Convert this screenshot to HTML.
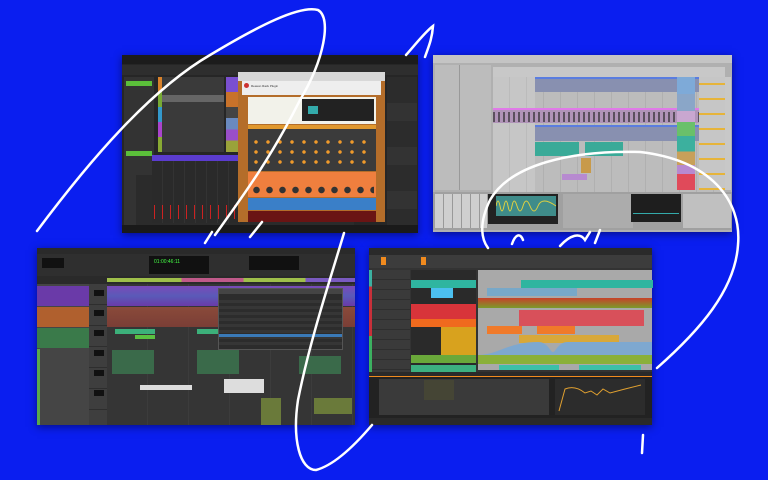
<!DOCTYPE html>
<html><head><meta charset="utf-8"><style>
*{margin:0;padding:0;box-sizing:border-box}
body{width:768px;height:480px;background:#0a1ef0;overflow:hidden;position:relative;font-family:"Liberation Sans",sans-serif}
.a{position:absolute}
.win{position:absolute;box-shadow:0 2px 8px rgba(0,0,30,.5)}
</style></head><body>

<!-- Window 1 (Reason) -->
<div class="win" style="left:122px;top:55px;width:296px;height:178px;background:#262626">
 <div class="a" style="left:0;top:0;width:296px;height:9px;background:#1c1c1c"></div>
 <div class="a" style="left:0;top:10px;width:296px;height:10px;background:#2e2e2e"></div>
 <div class="a" style="left:2px;top:22px;width:30px;height:150px;background:#333"></div>
 <div class="a" style="left:4px;top:26px;width:26px;height:5px;background:#5bbf3a"></div>
 <div class="a" style="left:4px;top:96px;width:26px;height:5px;background:#5bbf3a"></div>
 <div class="a" style="left:36px;top:22px;width:66px;height:75px;background:#3a3a3a"></div>
 <div class="a" style="left:36px;top:22px;width:4px;height:75px;background:linear-gradient(#d9822b 0 20%,#7a3 20% 40%,#39c 40% 60%,#a4c 60% 80%,#8a3 80%)"></div>
 <div class="a" style="left:40px;top:40px;width:62px;height:7px;background:#666"></div>
 <div class="a" style="left:104px;top:22px;width:12px;height:75px;background:linear-gradient(#7a4fd0 0 20%,#c8722a 20% 40%,#444 40% 55%,#6a8ac0 55% 70%,#9a4ec8 70% 85%,#9aa33a 85%)"></div>
 <div class="a" style="left:14px;top:120px;width:218px;height:50px;background:#2b2b2b"></div>
 <div class="a" style="left:30px;top:100px;width:90px;height:6px;background:#5b3ccf"></div>
 <div class="a" style="left:30px;top:106px;width:90px;height:62px;background:repeating-linear-gradient(90deg,#2a2a2a 0 10px,#333 10px 11px)"></div>
 <div class="a" style="left:32px;top:150px;width:86px;height:14px;background:repeating-linear-gradient(90deg,#c22 0 1px,transparent 1px 8px)"></div>
 <div class="a" style="left:265px;top:22px;width:30px;height:148px;background:repeating-linear-gradient(#2c2c2c 0 26px,#333 26px 44px)"></div>
 <div class="a" style="left:0;top:170px;width:296px;height:8px;background:#1a1a1a"></div>
 <div class="a" style="left:116px;top:17px;width:147px;height:150px;background:#b46d2a">
  <div class="a" style="left:0;top:0;width:147px;height:9px;background:#d8d8d8"></div>
  <div class="a" style="left:4px;top:9px;width:139px;height:14px;background:#eee"></div>
  <div class="a" style="left:6px;top:11px;width:5px;height:5px;border-radius:50%;background:#c33"></div>
  <div class="a" style="left:13px;top:12px;font-size:3px;color:#333">Reason Rack Plugin</div>
  <div class="a" style="left:10px;top:25px;width:128px;height:27px;background:#f2f2ea"></div>
  <div class="a" style="left:64px;top:27px;width:72px;height:22px;background:#222"></div>
  <div class="a" style="left:70px;top:34px;width:10px;height:8px;background:#3aa"></div>
  <div class="a" style="left:10px;top:53px;width:128px;height:46px;background:#3b3b3b;border-top:4px solid #e0982e"></div>
  <div class="a" style="left:12px;top:65px;width:124px;height:28px;background:radial-gradient(circle,#f09a2a 1.5px,transparent 2px) 0 0/12px 10px"></div>
  <div class="a" style="left:10px;top:100px;width:128px;height:25px;background:#ef7f3e"></div>
  <div class="a" style="left:12px;top:113px;width:124px;height:10px;background:radial-gradient(circle,#333 3px,transparent 3.5px) 0 0/13px 10px"></div>
  <div class="a" style="left:10px;top:126px;width:128px;height:12px;background:#3a7fc8"></div>
  <div class="a" style="left:10px;top:139px;width:128px;height:11px;background:#6a1414"></div>
 </div>
</div>

<!-- Window 2 (Ableton) -->
<div class="win" style="left:433px;top:55px;width:299px;height:177px;background:#b0b0b0">
 <div class="a" style="left:0;top:0;width:299px;height:8px;background:#c4c4c4"></div>
 <div class="a" style="left:2px;top:10px;width:56px;height:125px;background:#bcbcbc"></div>
 <div class="a" style="left:26px;top:10px;width:1px;height:125px;background:#999"></div>
 <div class="a" style="left:60px;top:12px;width:232px;height:10px;background:#c8c8c8"></div>
 <div class="a" style="left:60px;top:22px;width:230px;height:115px;background:repeating-linear-gradient(90deg,#bcbcbc 0 16px,#b0b0b0 16px 17px)"></div>
 <div class="a" style="left:60px;top:22px;width:42px;height:115px;background:rgba(255,255,255,.15)"></div>
 <div class="a" style="left:102px;top:22px;width:188px;height:15px;background:#8890b0;border-top:2px solid #5a7de0"></div>
 <div class="a" style="left:60px;top:53px;width:230px;height:15px;background:#b094b8;border-top:2px solid #e07ae8"></div>
 <div class="a" style="left:60px;top:57px;width:230px;height:10px;background:repeating-linear-gradient(90deg,#222 0 2px,transparent 2px 5px);opacity:.6"></div>
 <div class="a" style="left:102px;top:70px;width:188px;height:16px;background:#8890b0;border-top:2px solid #5a7de0"></div>
 <div class="a" style="left:102px;top:87px;width:44px;height:14px;background:#3aaa98"></div>
 <div class="a" style="left:152px;top:87px;width:38px;height:14px;background:#3aaa98"></div>
 <div class="a" style="left:148px;top:103px;width:10px;height:15px;background:#c89a4a"></div>
 <div class="a" style="left:129px;top:119px;width:25px;height:6px;background:#b78ad0"></div>
 <div class="a" style="left:292px;top:22px;width:6px;height:113px;background:#c8c8c8"></div>
 <div class="a" style="left:244px;top:22px;width:18px;height:113px;background:linear-gradient(#7eaad8 0 15%,#8aa6c8 15% 30%,#c9a7d0 30% 40%,#6ac06a 40% 52%,#3cb09e 52% 66%,#c8a05a 66% 78%,#b78ad0 78% 86%,#e04a5a 86%)"></div>
 <div class="a" style="left:266px;top:22px;width:26px;height:113px;background:repeating-linear-gradient(#c6c6c6 0 6px,#e6b43a 6px 8px,#c6c6c6 8px 15px)"></div>
 <div class="a" style="left:0;top:137px;width:299px;height:38px;background:#a0a0a0"></div>
 <div class="a" style="left:2px;top:139px;width:52px;height:34px;background:repeating-linear-gradient(90deg,#cfcfcf 0 8px,#999 8px 9px)"></div>
 <div class="a" style="left:55px;top:139px;width:70px;height:30px;background:#222"></div>
 <div class="a" style="left:63px;top:141px;width:60px;height:20px;background:#3f8c8a"></div>
 <svg class="a" style="left:63px;top:141px" width="60" height="20"><path d="M0 10 Q2 0 4 10 T8 10 T12 10 T16 10 T21 10 T27 10 T34 10 T42 10 T60 10" stroke="#e0d040" fill="none" stroke-width="1"/></svg>
 <div class="a" style="left:130px;top:139px;width:70px;height:34px;background:#acacac"></div>
 <div class="a" style="left:198px;top:139px;width:50px;height:28px;background:#1e1e1e"></div>
 <div class="a" style="left:200px;top:158px;width:46px;height:1px;background:#3aa"></div>
 <div class="a" style="left:250px;top:139px;width:48px;height:34px;background:#c0c0c0"></div>
</div>

<!-- Window 3 (Pro Tools) -->
<div class="win" style="left:37px;top:248px;width:318px;height:177px;background:#3a3a3a">
 <div class="a" style="left:0;top:0;width:318px;height:6px;background:#2a2a2a"></div>
 <div class="a" style="left:0;top:6px;width:318px;height:22px;background:#2f2f2f"></div>
 <div class="a" style="left:5px;top:10px;width:22px;height:10px;background:#111"></div>
 <div class="a" style="left:112px;top:8px;width:60px;height:18px;background:#111"></div>
 <div class="a" style="left:117px;top:11px;font-size:5px;color:#4f4">01:00:46:11</div>
 <div class="a" style="left:212px;top:8px;width:50px;height:14px;background:#111"></div>
 <div class="a" style="left:0;top:28px;width:318px;height:8px;background:#2a2a2a"></div>
 <div class="a" style="left:70px;top:30px;width:248px;height:4px;background:linear-gradient(90deg,#9fbf4a 0 30%,#c05a8a 30% 55%,#9fbf4a 55% 80%,#7a5ac0 80%)"></div>
 <div class="a" style="left:0;top:36px;width:52px;height:141px;background:#454545"></div>
 <div class="a" style="left:0;top:38px;width:52px;height:20px;background:#6a3aa8"></div>
 <div class="a" style="left:0;top:59px;width:52px;height:20px;background:#b0602e"></div>
 <div class="a" style="left:0;top:80px;width:52px;height:20px;background:#3a7a4a"></div>
 <div class="a" style="left:0;top:101px;width:3px;height:76px;background:#5aa84a"></div>
 <div class="a" style="left:52px;top:36px;width:18px;height:141px;background:repeating-linear-gradient(#3e3e3e 0 20px,#2e2e2e 20px 21px)"></div>
 <div class="a" style="left:57px;top:42px;width:10px;height:120px;background:repeating-linear-gradient(#111 0 6px,transparent 6px 20px)"></div>
 <div class="a" style="left:70px;top:36px;width:248px;height:141px;background:repeating-linear-gradient(90deg,#353535 0 40px,#3c3c3c 40px 41px)"></div>
 <div class="a" style="left:70px;top:38px;width:248px;height:20px;background:linear-gradient(#7a4ab8,#5a5ab8 50%,#6a3aa8)"></div>
 <div class="a" style="left:70px;top:59px;width:248px;height:20px;background:linear-gradient(#8a4a3a,#7a3e36)"></div>
 <div class="a" style="left:78px;top:81px;width:40px;height:5px;background:#3cb07a"></div>
 <div class="a" style="left:160px;top:81px;width:40px;height:5px;background:#3cb07a"></div>
 <div class="a" style="left:98px;top:87px;width:20px;height:4px;background:#5ac040"></div>
 <div class="a" style="left:75px;top:102px;width:42px;height:24px;background:#3a6a4a"></div>
 <div class="a" style="left:160px;top:102px;width:42px;height:24px;background:#3a6a4a"></div>
 <div class="a" style="left:262px;top:108px;width:42px;height:18px;background:#3a6a4a"></div>
 <div class="a" style="left:103px;top:137px;width:52px;height:5px;background:#ddd"></div>
 <div class="a" style="left:187px;top:131px;width:40px;height:14px;background:#ddd"></div>
 <div class="a" style="left:224px;top:150px;width:20px;height:27px;background:#6a7a3a"></div>
 <div class="a" style="left:277px;top:150px;width:38px;height:16px;background:#6a7a3a"></div>
 <div class="a" style="left:181px;top:40px;width:125px;height:62px;background:#2c2c2c;border:1px solid #555">
  <div class="a" style="left:0;top:0;width:123px;height:5px;background:#444"></div>
  <div class="a" style="left:0;top:8px;width:123px;height:50px;background:repeating-linear-gradient(#2c2c2c 0 3px,#363636 3px 6px)"></div>
  <div class="a" style="left:0;top:45px;width:123px;height:3px;background:#3a7ab8"></div>
 </div>
</div>

<!-- Window 4 (Bitwig) -->
<div class="win" style="left:369px;top:248px;width:283px;height:177px;background:#333">
 <div class="a" style="left:0;top:0;width:283px;height:7px;background:#2a2a2a"></div>
 <div class="a" style="left:0;top:7px;width:283px;height:13px;background:#3c3c3c"></div>
 <div class="a" style="left:12px;top:9px;width:5px;height:8px;background:#f08a1e"></div>
 <div class="a" style="left:52px;top:9px;width:5px;height:8px;background:#f08a1e"></div>
 <div class="a" style="left:0;top:22px;width:3px;height:110px;background:linear-gradient(#3cb0a0 0 15%,#c8303a 15% 60%,#3cb060 60%)"></div>
 <div class="a" style="left:3px;top:22px;width:38px;height:110px;background:repeating-linear-gradient(#3a3a3a 0 9px,#2e2e2e 9px 10px)"></div>
 <div class="a" style="left:42px;top:22px;width:65px;height:110px;background:#2a2a2a"></div>
 <div class="a" style="left:42px;top:32px;width:65px;height:8px;background:#2fb5a0"></div>
 <div class="a" style="left:62px;top:40px;width:22px;height:10px;background:#4cc0f0"></div>
 <div class="a" style="left:42px;top:56px;width:65px;height:15px;background:#d8343a"></div>
 <div class="a" style="left:42px;top:71px;width:65px;height:8px;background:#f06a1e"></div>
 <div class="a" style="left:72px;top:79px;width:35px;height:28px;background:#d8a21e"></div>
 <div class="a" style="left:42px;top:107px;width:65px;height:8px;background:#6aa83a"></div>
 <div class="a" style="left:42px;top:117px;width:65px;height:8px;background:#3cb080"></div>
 <div class="a" style="left:109px;top:22px;width:174px;height:100px;background:#a9a9a9"></div>
 <div class="a" style="left:152px;top:32px;width:132px;height:8px;background:#2fb5a0"></div>
 <div class="a" style="left:118px;top:40px;width:90px;height:8px;background:#78a8c8"></div>
 <div class="a" style="left:109px;top:50px;width:174px;height:10px;background:linear-gradient(#c8402a,#7a9a2a)"></div>
 <div class="a" style="left:150px;top:62px;width:125px;height:16px;background:#d8505a"></div>
 <div class="a" style="left:118px;top:78px;width:35px;height:8px;background:#f07a2a"></div>
 <div class="a" style="left:168px;top:78px;width:38px;height:8px;background:#f07a2a"></div>
 <div class="a" style="left:150px;top:87px;width:100px;height:8px;background:#d8a83a"></div>
 <svg class="a" style="left:109px;top:92px" width="174" height="15"><path d="M0 15 C20 15 30 2 60 2 C70 2 72 12 75 12 C78 12 80 2 90 2 L174 2 L174 15Z" fill="#7ea8d0"/></svg>
 <div class="a" style="left:109px;top:107px;width:174px;height:9px;background:#8ab03a"></div>
 <div class="a" style="left:130px;top:117px;width:60px;height:5px;background:#3cc0a8"></div>
 <div class="a" style="left:210px;top:117px;width:62px;height:5px;background:#3cc0a8"></div>
 <div class="a" style="left:0;top:124px;width:283px;height:4px;background:#2a2a2a"></div>
 <div class="a" style="left:0;top:128px;width:283px;height:42px;background:#222;border-top:1px solid #f08a1e"></div>
 <div class="a" style="left:10px;top:131px;width:170px;height:36px;background:#3a3a3a"></div>
 <div class="a" style="left:55px;top:132px;width:30px;height:20px;background:#454535"></div>
 <div class="a" style="left:186px;top:131px;width:90px;height:36px;background:#2c2c2c"></div>
 <svg class="a" style="left:186px;top:131px" width="90" height="36"><path d="M4 32 L10 10 Q20 6 30 14 L36 12 L42 16 L48 10 L55 14 L70 10 L86 6" stroke="#e0a030" fill="none" stroke-width="1"/></svg>
 <div class="a" style="left:0;top:170px;width:283px;height:7px;background:#2a2a2a"></div>
</div>

<svg class="a" style="left:0;top:0" width="768" height="480">
 <g stroke="#fff" stroke-width="2.5" fill="none" stroke-linecap="round">
  <path d="M37 231 C90 160 150 90 210 55 C260 25 300 5 318 10 C332 18 324 60 300 100 C270 160 240 200 215 235"/>
  <path d="M250 237 L262 222"/>
  <path d="M205 243 L212 232"/>
  <path d="M406 55 C415 45 425 32 433 26 C432 40 428 48 425 57"/>
  <path d="M344 233 C330 280 310 340 298 400 C292 440 300 470 316 470 C335 465 355 445 372 425"/>
  <path d="M657 368 C700 330 735 290 738 245 C742 200 710 160 640 152 C570 150 510 165 490 200 C478 225 482 240 488 248"/>
  <path d="M512 244 C515 235 520 232 523 240"/>
  <path d="M560 246 C570 235 580 232 585 240 L590 232"/>
  <path d="M595 243 L600 230"/>
  <path d="M643 435 L642 453"/>
 </g>
</svg>
</body></html>
